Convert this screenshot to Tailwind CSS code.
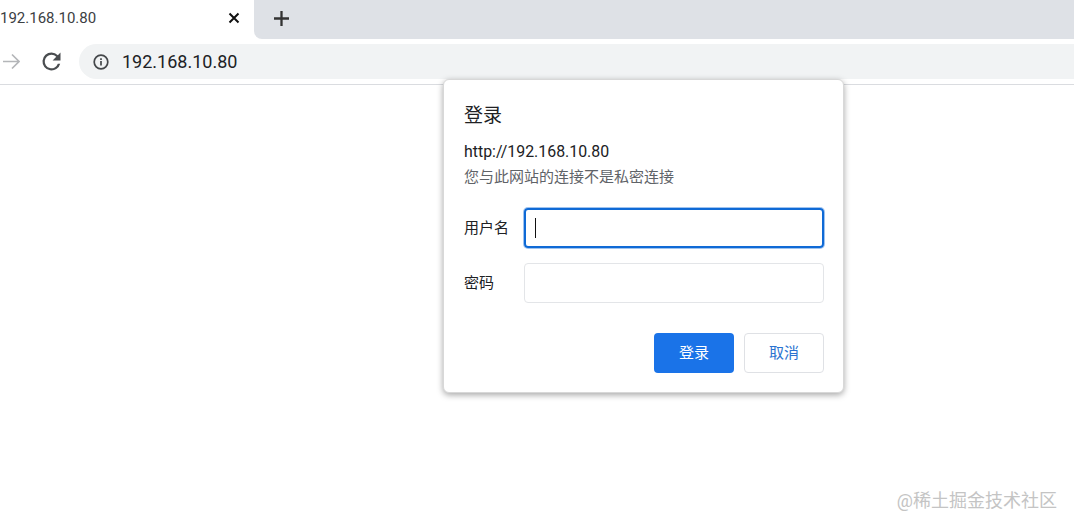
<!DOCTYPE html>
<html lang="zh-CN">
<head>
    <meta charset="UTF-8">
    <meta name="viewport" content="width=device-width, initial-scale=1.0">
    <title>192.168.10.80</title>
    <script src="https://cdn.jsdelivr.net/npm/@tailwindcss/browser@4"></script>
</head>
<body class="relative h-[528px] w-[1074px] overflow-hidden bg-white font-['Roboto','Noto_Sans_CJK_SC',sans-serif]">
    <!-- Tab strip -->
    <div class="flex h-[39px]">
        <div class="flex w-[254px] items-center justify-between pr-[14px] pb-[3px] text-[15px] text-[#3c4043]">
            <span>192.168.10.80</span>
            <svg class="h-3 w-3" viewBox="0 0 12 12" fill="none" stroke="#111" stroke-width="2"><path d="M1.5 1.5l9 9M10.5 1.5l-9 9"/></svg>
        </div>
        <div class="flex flex-1 items-center rounded-bl-lg bg-[#dee1e6] pb-[3px] pl-[20px]">
            <svg class="h-[15px] w-[15px]" viewBox="0 0 15 15" fill="none" stroke="#333" stroke-width="2.3"><path d="M7.5 0v15M0 7.5h15"/></svg>
        </div>
    </div>

    <!-- Toolbar -->
    <div class="flex h-[46px] items-start border-b border-[#dadce0] pt-[5px]">
        <svg class="mt-[9px] ml-[3px] h-[17px] w-[17px]" viewBox="0 0 17 17" fill="none" stroke="#b4b6b9" stroke-width="1.7"><path d="M0 8.5h16M9 1.5l7 7-7 7"/></svg>
        <svg class="mt-[4px] ml-[18px] h-[27px] w-[27px]" viewBox="0 0 24 24" fill="#4a4d50"><path d="M17.65 6.35A7.96 7.96 0 0 0 12 4a8 8 0 1 0 7.73 10h-2.08A6 6 0 1 1 12 6c1.66 0 3.14.69 4.22 1.78L13 11h7V4l-2.35 2.35z"/></svg>
        <div class="ml-[14px] flex h-[35px] flex-1 items-center rounded-l-full bg-[#f1f3f4] pl-[14px] text-[18px] text-[#202124]">
            <svg class="h-4 w-4" viewBox="0 0 16 16" fill="none" stroke="#44474a" stroke-width="1.7"><circle cx="8" cy="8" r="6.8"/><path d="M8 7v4.6M8 4.2v1.7"/></svg>
            <span class="ml-[13px]">192.168.10.80</span>
        </div>
    </div>

    <!-- Login dialog -->
    <div class="absolute top-[79px] left-[443px] h-[314px] w-[401px] rounded-[6px] border border-[#d8d8d8] bg-white pt-[22px] pr-[19px] pl-[20px] shadow-[0_2px_6px_rgba(0,0,0,0.35)]">
        <div class="text-[19px] leading-[28px] text-[#202124]">登录</div>
        <div class="mt-[10px] text-[15.9px] leading-[24px] text-[#202124]">http://192.168.10.80</div>
        <div class="mt-[2px] text-[15px] leading-[22px] text-[#5f6368]">您与此网站的连接不是私密连接</div>

        <div class="mt-[20px] flex items-center">
            <label class="w-[60px] text-[15px] text-[#202124]">用户名</label>
            <div class="flex h-[40px] w-[300px] items-center rounded-[4px] border-2 border-[#0f6ad6] pl-[9px] ring-1 ring-[#0f6ad6]/40">
                <div class="h-[20px] w-px bg-[#111]"></div>
            </div>
        </div>
        <div class="mt-[15px] flex items-center">
            <label class="w-[60px] text-[15px] text-[#202124]">密码</label>
            <div class="h-[40px] w-[300px] rounded-[4px] border border-[#e3e5e8]"></div>
        </div>

        <div class="mt-[30px] flex justify-end gap-[10px] text-[15px]">
            <button class="h-[40px] w-[80px] rounded-[4px] bg-[#1a73e8] text-white">登录</button>
            <button class="h-[40px] w-[80px] rounded-[4px] border border-[#dfe1e5] text-[#2b73d0]">取消</button>
        </div>
    </div>

    <!-- Watermark -->
    <div class="absolute top-[489px] right-[17px] text-[18px] leading-[24px] text-[#c4c4c4]">@稀土掘金技术社区</div>
</body>
</html>
